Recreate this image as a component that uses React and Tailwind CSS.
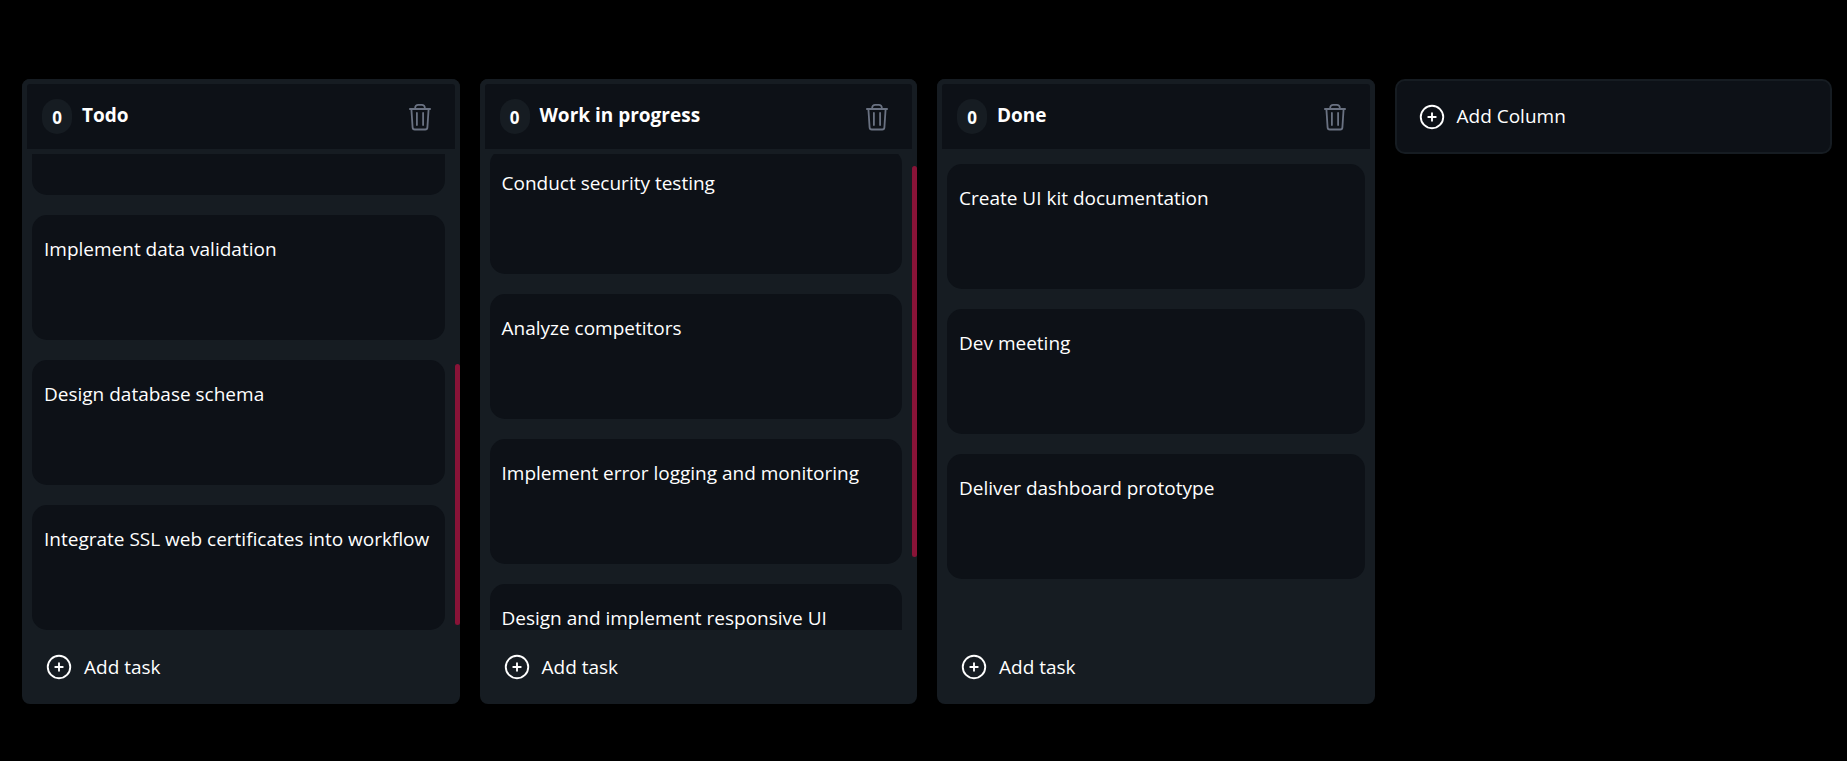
import { useLayoutEffect, useRef, useState } from "react";
import { HiOutlinePlusCircle } from "react-icons/hi2";

const columns = [
  {
    id: "todo",
    title: "Todo",
    scrollTop: 384,
    tasks: ["", "", "", "Implement data validation", "Design database schema", "Integrate SSL web certificates into workflow"],
  },
  {
    id: "doing",
    title: "Work in progress",
    scrollTop: 15,
    tasks: [
      "Conduct security testing",
      "Analyze competitors",
      "Implement error logging and monitoring",
      "Design and implement responsive UI",
    ],
  },
  {
    id: "done",
    title: "Done",
    scrollTop: 0,
    tasks: ["Create UI kit documentation", "Dev meeting", "Deliver dashboard prototype"],
  },
];

function TrashIcon() {
  return (
    <svg
      viewBox="0 0 30 30"
      className="size-[30px]"
      fill="none"
      stroke="currentColor"
      strokeWidth="1.8"
      strokeLinecap="round"
      strokeLinejoin="round"
      aria-hidden="true"
    >
      <path d="M4.9 7H25.1" />
      <path d="M10.2 6.7V5.7a2.9 2.9 0 0 1 2.9-2.9h3.8a2.9 2.9 0 0 1 2.9 2.9v1" />
      <path d="M6.4 7.1l1.2 18.3a2.2 2.2 0 0 0 2.2 2.1h10.4a2.2 2.2 0 0 0 2.2-2.1l1.2-18.3" />
      <path d="M11.9 11V23M18.1 11V23" />
    </svg>
  );
}

function TaskList({ tasks, scrollTop }) {
  const ref = useRef(null);
  const [thumb, setThumb] = useState(null);

  const measure = () => {
    const el = ref.current;
    if (el.scrollHeight <= el.clientHeight) {
      setThumb(null);
      return;
    }
    setThumb({
      top: `${(el.scrollTop / el.scrollHeight) * 100}%`,
      height: `${(el.clientHeight / el.scrollHeight) * 100}%`,
    });
  };

  useLayoutEffect(() => {
    ref.current.scrollTop = scrollTop;
    measure();
    window.addEventListener("resize", measure);
    return () => window.removeEventListener("resize", measure);
  }, [scrollTop]);

  return (
    <div className="relative flex min-h-0 grow flex-col">
      <ul
        ref={ref}
        onScroll={measure}
        className={`flex min-h-0 grow flex-col gap-5 overflow-x-hidden overflow-y-auto py-2.5 pl-2.5 [scrollbar-width:none] ${
          thumb ? "pr-[15px]" : "pr-2.5"
        }`}
      >
        {tasks.map((task, i) => (
          <li key={i} className="h-[125px] shrink-0 rounded-[15px] bg-[#0d1117] px-3 pt-5">
            <p className="leading-7">{task}</p>
          </li>
        ))}
      </ul>
      {thumb && <div className="absolute right-0 w-[5px] rounded-full bg-[#881337]" style={thumb} />}
    </div>
  );
}

function Column({ column }) {
  return (
    <section className="flex h-[625px] min-w-0 flex-col rounded-lg bg-[#161c22]">
      <header className="flex h-[75px] shrink-0 items-center justify-between rounded-t-lg border-[5px] border-[#161c22] bg-[#0d1117] pr-5 pl-[15px]">
        <div className="flex items-center gap-2.5">
          <span className="flex h-[35px] w-[30px] items-center justify-center rounded-full bg-[#161c22] pt-0.5 text-[17px] font-bold">
            0
          </span>
          <h2 className="pb-1 font-bold leading-7">{column.title}</h2>
        </div>
        <button type="button" aria-label="Delete column" className="text-gray-500">
          <TrashIcon />
        </button>
      </header>
      <TaskList tasks={column.tasks} scrollTop={column.scrollTop} />
      <button type="button" className="flex h-[74px] shrink-0 items-center gap-2.5 px-[22px] text-left">
        <HiOutlinePlusCircle className="size-[30px]" />
        <span>Add task</span>
      </button>
    </section>
  );
}

export default function App() {
  return (
    <main className="grid min-h-screen grid-cols-4 items-start gap-5 bg-black pt-[79px] pr-[15px] pl-[22px] font-['Open_Sans','Noto_Sans',sans-serif] text-[19px] text-white">
      {columns.map((column) => (
        <Column key={column.id} column={column} />
      ))}
      <button
        type="button"
        className="flex h-[75px] min-w-0 items-center gap-2.5 rounded-[10px] border-2 border-[#161c22] bg-[#0d1117] px-5 text-left"
      >
        <HiOutlinePlusCircle className="size-[30px]" />
        <span>Add Column</span>
      </button>
    </main>
  );
}
